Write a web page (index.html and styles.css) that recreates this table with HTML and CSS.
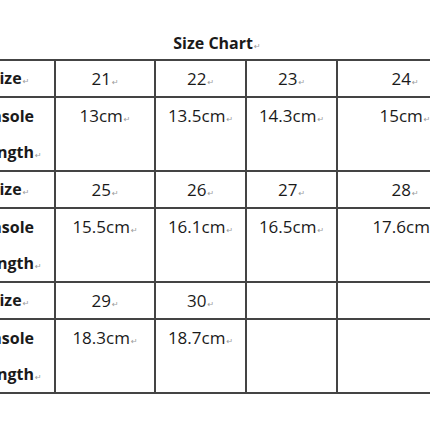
FILE: index.html
```html
<!DOCTYPE html>
<html>
<head>
<meta charset="utf-8">
<link rel="stylesheet" href="styles.css">
</head>
<body>
<div class="page">
  <div class="title">Size Chart<span class="pm">↵</span></div>
  <table class="chart">
    <colgroup>
      <col class="c0"><col class="c1"><col class="c2"><col class="c3"><col class="c4">
    </colgroup>
    <tr class="size">
      <td class="label">Size<span class="pm">↵</span></td>
      <td>21<span class="pm">↵</span></td>
      <td>22<span class="pm">↵</span></td>
      <td>23<span class="pm">↵</span></td>
      <td>24<span class="pm">↵</span></td>
    </tr>
    <tr class="insole">
      <td class="label">Insole<br>Length<span class="pm">↵</span></td>
      <td>13cm<span class="pm">↵</span></td>
      <td>13.5cm<span class="pm">↵</span></td>
      <td>14.3cm<span class="pm">↵</span></td>
      <td>15cm<span class="pm">↵</span></td>
    </tr>
    <tr class="size">
      <td class="label">Size<span class="pm">↵</span></td>
      <td>25<span class="pm">↵</span></td>
      <td>26<span class="pm">↵</span></td>
      <td>27<span class="pm">↵</span></td>
      <td>28<span class="pm">↵</span></td>
    </tr>
    <tr class="insole">
      <td class="label">Insole<br>Length<span class="pm">↵</span></td>
      <td>15.5cm<span class="pm">↵</span></td>
      <td>16.1cm<span class="pm">↵</span></td>
      <td>16.5cm<span class="pm">↵</span></td>
      <td>17.6cm<span class="pm">↵</span></td>
    </tr>
    <tr class="size">
      <td class="label">Size<span class="pm">↵</span></td>
      <td>29<span class="pm">↵</span></td>
      <td>30<span class="pm">↵</span></td>
      <td></td>
      <td></td>
    </tr>
    <tr class="insole">
      <td class="label">Insole<br>Length<span class="pm">↵</span></td>
      <td>18.3cm<span class="pm">↵</span></td>
      <td>18.7cm<span class="pm">↵</span></td>
      <td></td>
      <td></td>
    </tr>
  </table>
</div>
</body>
</html>
```

FILE: styles.css
```css
html, body {
  margin: 0;
  padding: 0;
  background: #ffffff;
}
body {
  width: 430px;
  height: 430px;
  overflow: hidden;
  font-family: "Open Sans", Lato, "Liberation Sans", sans-serif;
  color: #1a1a1a;
}
.page {
  width: 430px;
}
.title {
  height: 59px;
  box-sizing: border-box;
  padding-top: 31px;
  line-height: 24px;
  font-size: 16px;
  font-weight: bold;
  text-align: center;
  padding-left: 4px;
}
.pm {
  font-family: "DejaVu Sans", sans-serif;
  font-size: 8px;
  line-height: 1;
  font-weight: normal;
  color: #9a9a9a;
  margin-left: 1px;
}
.chart {
  border-collapse: collapse;
  margin-left: -36px;
  table-layout: fixed;
  width: 508px;
}
.c0 { width: 90px; }
.c1 { width: 100px; }
.c2 { width: 91px; }
.c3 { width: 91px; }
.c4 { width: 136px; }
.chart td {
  border: 2px solid #444;
  padding: 0;
  text-align: center;
  vertical-align: top;
  font-size: 17px;
  white-space: nowrap;
}
.size td {
  line-height: 35px;
}
.insole td {
  line-height: 36px;
}
.chart td.label {
  font-weight: bold;
  font-size: 16px;
}
```
